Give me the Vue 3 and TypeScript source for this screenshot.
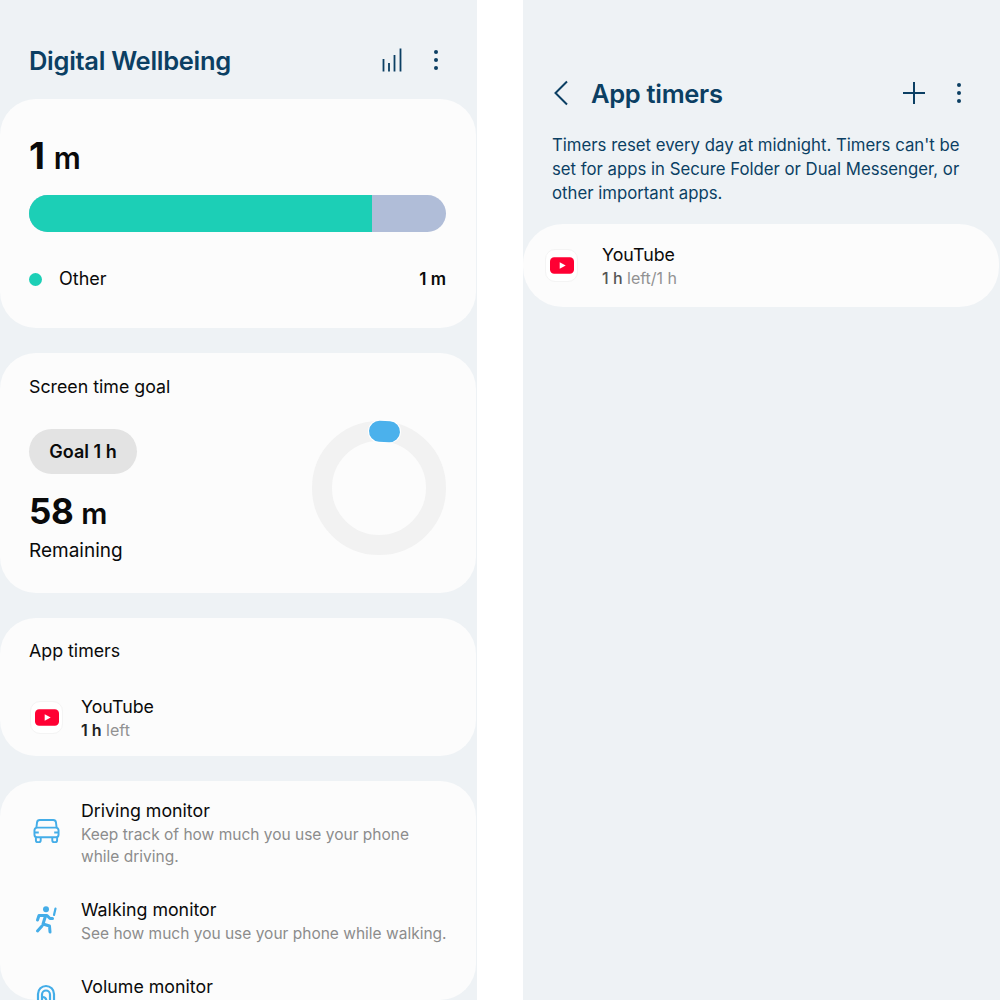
<script setup lang="ts">
const monitors = [
  { name: 'Driving monitor', desc: 'Keep track of how much you use your phone while driving.', icon: 'car' },
  { name: 'Walking monitor', desc: 'See how much you use your phone while walking.', icon: 'walk' },
  { name: 'Volume monitor', desc: '', icon: 'ear' },
]
</script>

<template>
  <div class="screen">
    <section class="panel">
      <header class="top">
        <h1 class="title">Digital Wellbeing</h1>
        <div class="actions">
          <svg class="bars" width="21" height="24" viewBox="0 0 21 24">
            <path d="M1.500 11V23.500M7 15V23.500M12.500 7V23.500M18.500 0.500V23.500" stroke="#0b3f63" stroke-width="1.800" fill="none" />
          </svg>
          <span class="dots"><i></i><i></i><i></i></span>
        </div>
      </header>

      <div class="card usage">
        <div class="big">1 <small>m</small></div>
        <div class="bar"><div class="bar-fill"></div></div>
        <div class="legend">
          <span class="dot"></span>
          <span class="legend-name">Other</span>
          <b class="legend-val">1 m</b>
        </div>
      </div>

      <div class="card goal">
        <div class="card-title">Screen time goal</div>
        <div class="goal-body">
          <div class="goal-left">
            <span class="pill">Goal 1 h</span>
            <div class="big remain">58 <small>m</small></div>
            <div class="remain-label">Remaining</div>
          </div>
          <div class="ring"><span class="blob"></span></div>
        </div>
      </div>

      <div class="card timers">
        <div class="card-title">App timers</div>
        <div class="row yt-row">
          <div class="yt-tile">
            <svg width="24" height="17" viewBox="0 0 26 18">
              <rect width="26" height="18" rx="4.500" fill="#ff0033" />
              <path d="M10.500 5.500 17 9l-6.500 3.500z" fill="#fff" />
            </svg>
          </div>
          <div class="row-text">
            <div class="row-name">YouTube</div>
            <div class="row-sub"><b>1 h</b> left</div>
          </div>
        </div>
      </div>

      <div class="card monitors">
        <div v-for="m in monitors" :key="m.name" class="monitor">
          <div class="monitor-icon" :class="'icon-' + m.icon">
            <svg v-if="m.icon === 'car'" width="27" height="26" viewBox="0 0 28 26" fill="none" stroke="#44ade8" stroke-width="2" stroke-linejoin="round">
              <path d="M3.500 9.500 4.200 4Q4.500 1.500 7 1.500H21Q23.500 1.500 23.800 4L24.500 9.500" />
              <rect x="1.500" y="9.500" width="25" height="10" rx="3" />
              <path d="M1.500 14.500H6M22 14.500H26.500" />
              <path d="M3 19.500V22.500Q3 24.500 5 24.500H6Q8 24.500 8 22.500V19.500M20 19.500V22.500Q20 24.500 22 24.500H23Q25 24.500 25 22.500V19.500" />
            </svg>
            <svg v-else-if="m.icon === 'walk'" width="22" height="28" viewBox="0 0 22 28" fill="none">
              <circle cx="11" cy="3.200" r="3" fill="#44ade8" />
              <path d="M2.500 14 4 9.500H12L15 12.500H17.500M10.500 10 8 18 14.500 20 15 26M7 20 2.500 25" stroke="#44ade8" stroke-width="3" stroke-linecap="round" stroke-linejoin="round" />
              <path d="M20.500 2.500 19 9" stroke="#44ade8" stroke-width="2.200" stroke-linecap="round" />
            </svg>
            <svg v-else width="20" height="26" viewBox="0 0 20 26" fill="none" stroke="#44ade8" stroke-width="2.200" stroke-linecap="round">
              <path d="M2 24V10A8 8 0 0 1 18 10V24" />
              <path d="M6 18V10.500A4 4 0 0 1 14 10.500V22" />
              <path d="M6.500 13Q10.500 13 10.500 18V24" />
            </svg>
          </div>
          <div class="row-text">
            <div class="row-name">{{ m.name }}</div>
            <div v-if="m.desc" class="monitor-desc">{{ m.desc }}</div>
          </div>
        </div>
      </div>
    </section>

    <section class="panel right">
      <header class="top-right">
        <svg class="back" width="16" height="26" viewBox="0 0 16 26">
          <path d="M14 1.500 2.500 13 14 24.500" stroke="#0b3f63" stroke-width="2" fill="none" />
        </svg>
        <h1 class="title">App timers</h1>
        <div class="actions">
          <svg width="24" height="24" viewBox="0 0 24 24">
            <path d="M12 1V23M1 12H23" stroke="#0b3f63" stroke-width="2" fill="none" />
          </svg>
          <span class="dots"><i></i><i></i><i></i></span>
        </div>
      </header>
      <p class="note">Timers reset every day at midnight. Timers can't be set for apps in Secure Folder or Dual Messenger, or other important apps.</p>
      <div class="card timer-card">
        <div class="row">
          <div class="yt-tile">
            <svg width="24" height="17" viewBox="0 0 26 18">
              <rect width="26" height="18" rx="4.500" fill="#ff0033" />
              <path d="M10.500 5.500 17 9l-6.500 3.500z" fill="#fff" />
            </svg>
          </div>
          <div class="row-text">
            <div class="row-name">YouTube</div>
            <div class="row-sub"><em>1 h</em> left/1 h</div>
          </div>
        </div>
      </div>
    </section>
  </div>
</template>

<style scoped>
.screen {
  display: flex;
  justify-content: space-between;
  width: 1000px;
  height: 1000px;
  overflow: hidden;
  background: #fff;
  font-family: Inter, "Noto Sans", sans-serif;
  color: #0a0a0a;
}

.panel {
  width: 477px;
  height: 1000px;
  overflow: hidden;
  background: #eef2f5;
}

.top {
  display: flex;
  align-items: center;
  justify-content: space-between;
  height: 78px;
  padding: 21px 39px 0 29px;
}

.title {
  margin: 0;
  font-size: 25.500px;
  font-weight: 600;
  letter-spacing: -0.3px;
  color: #0b3f63;
}

.actions {
  display: flex;
  align-items: center;
  gap: 31px;
}

.bars {
  margin-top: -1px;
}

.dots {
  display: flex;
  flex-direction: column;
  gap: 4px;
}

.dots i {
  display: block;
  width: 4px;
  height: 4px;
  border-radius: 50%;
  background: #0b3f63;
}

.card {
  width: 476px;
  margin-bottom: 25px;
  background: #fcfcfc;
  border-radius: 36px;
}

.usage {
  height: 229px;
  padding: 35px 30px 0 29px;
  box-sizing: border-box;
}

.big {
  font-size: 37px;
  line-height: 44px;
  font-weight: 700;
  color: #0a0a0a;
}

.big small {
  font-size: 30px;
  font-weight: 600;
}

.bar {
  height: 37px;
  margin-top: 15px;
  border-radius: 19px;
  overflow: hidden;
  background: #b0bdd8;
}

.bar-fill {
  width: 343px;
  height: 100%;
  background: #1ccfb6;
}

.legend {
  display: flex;
  align-items: center;
  margin-top: 34px;
  font-size: 18px;
  line-height: 26px;
}

.dot {
  width: 13px;
  height: 13px;
  border-radius: 50%;
  background: #1ccfb6;
}

.legend-name {
  margin-left: 17px;
}

.legend-val {
  margin-left: auto;
  font-size: 17px;
  font-weight: 600;
}

.goal {
  height: 240px;
  padding: 22px 30px 0 29px;
  box-sizing: border-box;
}

.card-title {
  font-size: 17.800px;
  line-height: 24px;
}

.goal-body {
  display: flex;
  justify-content: space-between;
}

.goal-left {
  padding-top: 30px;
}

.pill {
  display: inline-block;
  width: 108px;
  height: 45px;
  line-height: 45px;
  text-align: center;
  border-radius: 23px;
  background: #e3e3e3;
  font-size: 18px;
  font-weight: 600;
}

.remain {
  margin-top: 15px;
  font-size: 35px;
  letter-spacing: -0.4px;
}

.remain small {
  font-size: 29px;
}

.remain-label {
  margin-top: 1px;
  font-size: 19px;
  line-height: 28px;
}

.ring {
  position: relative;
  width: 134px;
  height: 134px;
  margin-top: 22px;
  box-sizing: border-box;
  border: 20px solid #f2f2f2;
  border-radius: 50%;
}

.blob {
  position: absolute;
  top: -20px;
  left: 37px;
  width: 31px;
  height: 21px;
  border-radius: 11px;
  background: #4bb1ec;
  box-shadow: 0 0 0 1px #fff;
  transform: rotate(3deg);
}

.timers {
  height: 138px;
  padding-top: 21px;
  box-sizing: border-box;
}

.timers .card-title {
  padding-left: 29px;
}

.row {
  display: flex;
  align-items: center;
}

.yt-row {
  margin-top: 32px;
}

.yt-tile {
  display: flex;
  align-items: center;
  justify-content: center;
  flex: none;
  width: 31px;
  height: 31px;
  margin-top: -3px;
  margin-left: 30px;
  border: 1px solid #f4f4f4;
  border-radius: 10px;
  background: #fff;
}

.row-text {
  margin-left: 18px;
}

.row-name {
  font-size: 17.800px;
  line-height: 24px;
  color: #0a0a0a;
}

.row-sub {
  font-size: 16px;
  line-height: 23px;
  color: #929292;
}

.row-sub b {
  font-weight: 600;
  color: #222;
}

.row-sub em {
  font-style: normal;
  font-weight: 500;
  color: #555;
}

.monitors {
  height: 219px;
  margin-bottom: 0;
  padding-top: 18px;
  box-sizing: border-box;
}

.monitor {
  display: flex;
  align-items: flex-start;
  margin-bottom: 30px;
}

.monitor-icon {
  display: flex;
  justify-content: center;
  flex: none;
  width: 36px;
  margin-left: 28px;
}

.icon-car {
  margin-top: 19px;
}

.icon-walk {
  margin-top: 8px;
}

.icon-ear {
  margin-top: 9px;
}

.monitor .row-text {
  margin-left: 17px;
}

.monitor-desc {
  width: 370px;
  margin-top: 1px;
  font-size: 15.500px;
  line-height: 22px;
  color: #8c8c8c;
}

.top-right {
  display: flex;
  align-items: center;
  padding: 69px 39px 0 30px;
  height: 48px;
}

.top-right .title {
  margin-left: 22px;
}

.top-right .actions {
  margin-left: auto;
  gap: 31px;
}

.note {
  margin: 16px 30px 0 29px;
  font-size: 16.750px;
  line-height: 24px;
  color: #0b3f63;
}

.timer-card {
  height: 83px;
  margin-top: 19px;
  padding-top: 2px;
  box-sizing: border-box;
  border-radius: 40px;
  display: flex;
  align-items: center;
}

.timer-card .yt-tile {
  margin-left: 22px;
}

.timer-card .row-text {
  margin-left: 24px;
}
</style>

<style>
html, body {
  margin: 0;
  background: #fff;
}
</style>
